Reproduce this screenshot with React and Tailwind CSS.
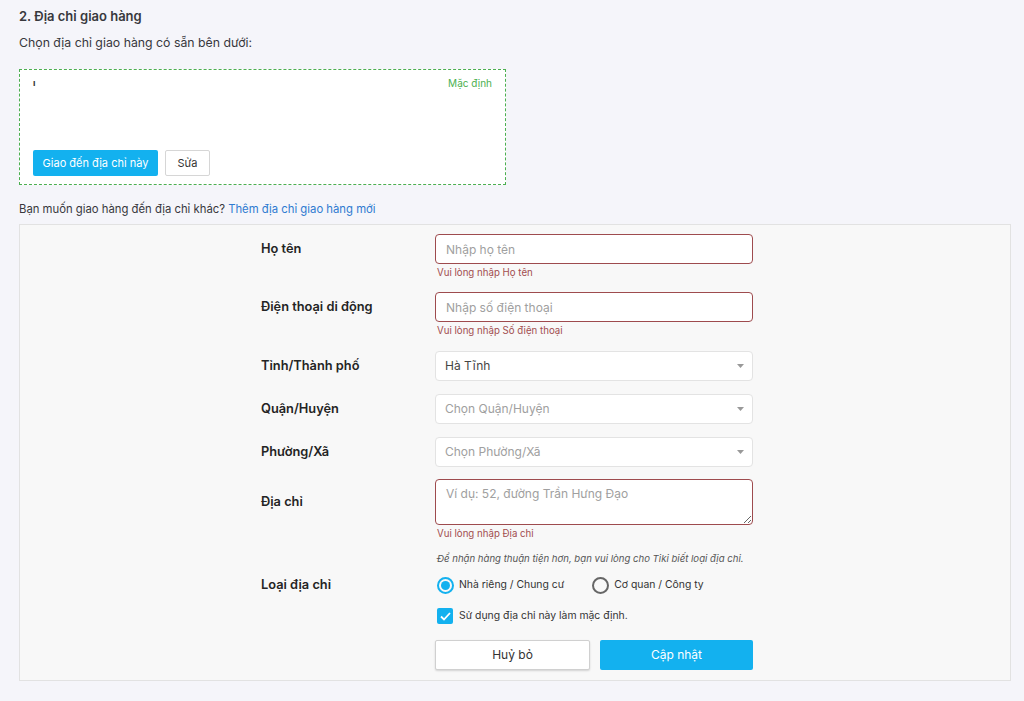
import React from 'react';

const font = { fontFamily: 'Inter, "Noto Sans", sans-serif' };

function Caret() {
  return (
    <svg width="7" height="4" viewBox="0 0 7 4" className="shrink-0">
      <path d="M0 0 L7 0 L3.5 4 Z" fill="#999" />
    </svg>
  );
}

function Row({ label, children, className = 'mb-[13px]', labelH = 'h-[30px]' }) {
  return (
    <div className={`flex items-start ${className}`}>
      <div className={`w-[174px] ${labelH} flex items-center text-[12.8px] font-semibold text-[#242424]`}>{label}</div>
      <div className="w-[318px]">{children}</div>
    </div>
  );
}

function ErrorText({ children }) {
  return <div className="mt-[2px] ml-[2px] text-[9.7px] leading-[14px] text-[#a24e50]">{children}</div>;
}

function TextInput({ placeholder }) {
  return (
    <input
      placeholder={placeholder}
      className="w-full h-[30px] px-[10px] bg-white border border-[#9e4b4e] rounded-[4px] text-[12px] text-[#333] placeholder-[#a0a0a0] outline-none"
    />
  );
}

function SelectBox({ value, placeholder }) {
  return (
    <div className="w-full h-[30px] pl-[9px] pr-[8px] bg-white border border-[#e3e3e3] rounded-[4px] flex items-center justify-between">
      <span className={`text-[12px] ${value ? 'text-[#444]' : 'text-[#a0a0a0]'}`}>{value || placeholder}</span>
      <Caret />
    </div>
  );
}

export default function App() {
  return (
    <div style={font} className="w-[1024px] h-[701px] bg-[#f5f5fa] text-[#38383d] overflow-hidden">
      <div className="pl-[19px] pt-[6px]">
        <h2 className="text-[13px] leading-[20px] font-semibold text-[#38383d]">2. Địa chỉ giao hàng</h2>
        <p className="mt-[8px] text-[12.3px] leading-[18px] text-[#38383d]">Chọn địa chỉ giao hàng có sẵn bên dưới:</p>

        <div className="mt-[17px] w-[487px] h-[116px] bg-white border border-dashed border-[#4caf50] px-[13px] pt-[6px] flex flex-col">
          <div className="flex justify-between items-start">
            <span className="text-[9px] font-bold text-[#333] leading-[14px]">ı</span>
            <span className="text-[10px] leading-[14px] text-[#4caf50]">Mặc định</span>
          </div>
          <div className="flex-1" />
          <div className="flex gap-[7px] mb-[8px]">
            <button className="w-[125px] h-[26px] rounded-[2px] bg-[#13b1ef] text-white text-[11px]">Giao đến địa chỉ này</button>
            <button className="w-[45px] h-[26px] rounded-[2px] bg-white border border-[#d6d6d6] text-[#333] text-[11px]">Sửa</button>
          </div>
        </div>

        <p className="mt-[16px] text-[11.3px] leading-[16px] text-[#38383d]">
          Bạn muốn giao hàng đến địa chỉ khác? <span className="text-[#2f7bd1]">Thêm địa chỉ giao hàng mới</span>
        </p>

        <div className="mt-[7px] w-[992px] h-[457px] bg-[#f8f8f8] border border-[#e2e2e2] pt-[9px] pl-[241px]">
          <Row label="Họ tên" className="mb-[12px]">
            <TextInput placeholder="Nhập họ tên" />
            <ErrorText>Vui lòng nhập Họ tên</ErrorText>
          </Row>
          <Row label="Điện thoại di động">
            <TextInput placeholder="Nhập số điện thoại" />
            <ErrorText>Vui lòng nhập Số điện thoại</ErrorText>
          </Row>
          <Row label="Tỉnh/Thành phố">
            <SelectBox value="Hà Tĩnh" />
          </Row>
          <Row label="Quận/Huyện">
            <SelectBox placeholder="Chọn Quận/Huyện" />
          </Row>
          <Row label="Phường/Xã" className="mb-[12px]">
            <SelectBox placeholder="Chọn Phường/Xã" />
          </Row>
          <Row label="Địa chỉ" labelH="h-[46px]" className="mb-[10px]">
            <textarea
              placeholder="Ví dụ: 52, đường Trần Hưng Đạo"
              className="block w-full h-[46px] px-[10px] py-[5px] bg-white border border-[#9e4b4e] rounded-[4px] text-[12px] text-[#333] placeholder-[#a0a0a0] outline-none"
            />
            <ErrorText>Vui lòng nhập Địa chỉ</ErrorText>
            <div className="mt-[11px] ml-[2px] text-[9.6px] leading-[14px] italic text-[#555] whitespace-nowrap">
              Để nhận hàng thuận tiện hơn, bạn vui lòng cho Tiki biết loại địa chỉ.
            </div>
          </Row>
          <Row label="Loại địa chỉ" labelH="h-[18px]" className="mb-[13px]">
            <div className="h-[18px] flex items-center text-[10.4px] text-[#333]">
              <span className="w-[17px] h-[17px] rounded-full border-2 border-[#13b1ef] flex items-center justify-center ml-[2px]">
                <span className="w-[9px] h-[9px] rounded-full bg-[#13b1ef]" />
              </span>
              <span className="ml-[5px]">Nhà riêng / Chung cư</span>
              <span className="ml-[28px] w-[17px] h-[17px] rounded-full border-2 border-[#666]" />
              <span className="ml-[5px]">Cơ quan / Công ty</span>
            </div>
          </Row>
          <Row label="" labelH="h-[18px]" className="mb-[15px]">
            <div className="h-[18px] flex items-center text-[10.4px] text-[#333]">
              <span className="w-[16px] h-[16px] rounded-[2px] bg-[#13b1ef] flex items-center justify-center ml-[2px]">
                <svg width="11" height="9" viewBox="0 0 11 9">
                  <path d="M1 4.5 L4 7.5 L10 1" stroke="white" strokeWidth="1.8" fill="none" />
                </svg>
              </span>
              <span className="ml-[6px]">Sử dụng địa chỉ này làm mặc định.</span>
            </div>
          </Row>
          <Row label="" className="mb-0">
            <div className="flex gap-[10px]">
              <button className="w-[155px] h-[30px] bg-white border border-[#d0d0d0] shadow-[0_1px_2px_rgba(0,0,0,0.15)] rounded-[2px] text-[12px] text-[#333]">Huỷ bỏ</button>
              <button className="w-[153px] h-[30px] bg-[#13b1ef] rounded-[2px] text-[12px] text-white">Cập nhật</button>
            </div>
          </Row>
        </div>
      </div>
    </div>
  );
}
